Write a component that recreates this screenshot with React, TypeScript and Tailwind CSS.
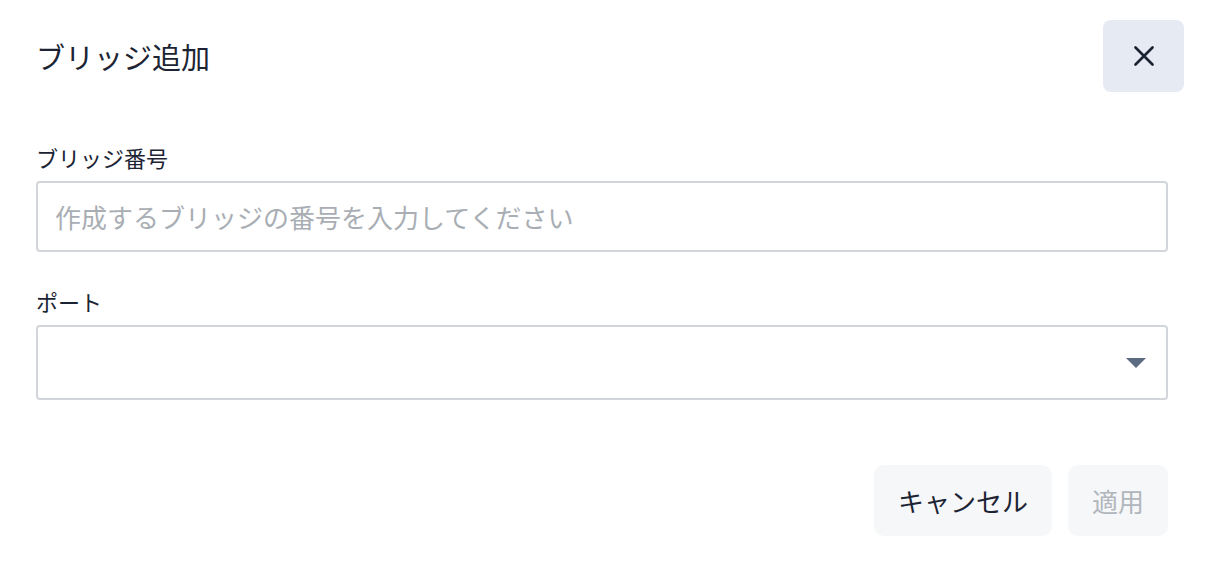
import React from "react";

const jp = { fontFamily: '"Noto Sans CJK JP", "Noto Sans", sans-serif' };

export default function App() {
  return (
    <div className="w-[1206px] h-[580px] bg-white overflow-hidden" style={jp}>
      <div className="pl-[36px] pr-[38px] pt-[20px]">
        <div className="flex items-center justify-between">
          <h1 className="text-[29px] leading-[40px] text-[#1c2434] font-normal">ブリッジ追加</h1>
          <button className="-mr-[16px] w-[81px] h-[72px] rounded-[8px] bg-[#e6ebf3] flex items-center justify-center">
            <svg width="20" height="20" viewBox="0 0 20 20" fill="none">
              <path d="M1.5 1.5 L18.5 18.5 M18.5 1.5 L1.5 18.5" stroke="#1a2233" strokeWidth="2.6" strokeLinecap="round" />
            </svg>
          </button>
        </div>

        <div className="mt-[50px] text-[22px] leading-[30px] text-[#1c2434]">ブリッジ番号</div>
        <div className="mt-[9px] h-[71px] rounded-[4px] border-2 border-[#d2d6db] flex items-center px-[17px]">
          <span className="text-[26px] text-[#a9aeb4]">作成するブリッジの番号を入力してください</span>
        </div>

        <div className="mt-[34px] text-[22px] leading-[30px] text-[#1c2434]">ポート</div>
        <div className="mt-[9px] h-[75px] rounded-[4px] border-2 border-[#d2d6db] flex items-center justify-end pr-[20px]">
          <svg width="20" height="10" viewBox="0 0 20 10">
            <path d="M0 0 L20 0 L10 10 Z" fill="#5d6b81" />
          </svg>
        </div>

        <div className="mt-[65px] flex justify-end gap-[16px]">
          <button className="w-[178px] h-[71px] rounded-[10px] bg-[#f6f7f9] text-[26px] text-[#1c2434]">キャンセル</button>
          <button className="w-[100px] h-[71px] rounded-[10px] bg-[#f6f7f9] text-[26px] text-[#b1b6bc]">適用</button>
        </div>
      </div>
    </div>
  );
}
